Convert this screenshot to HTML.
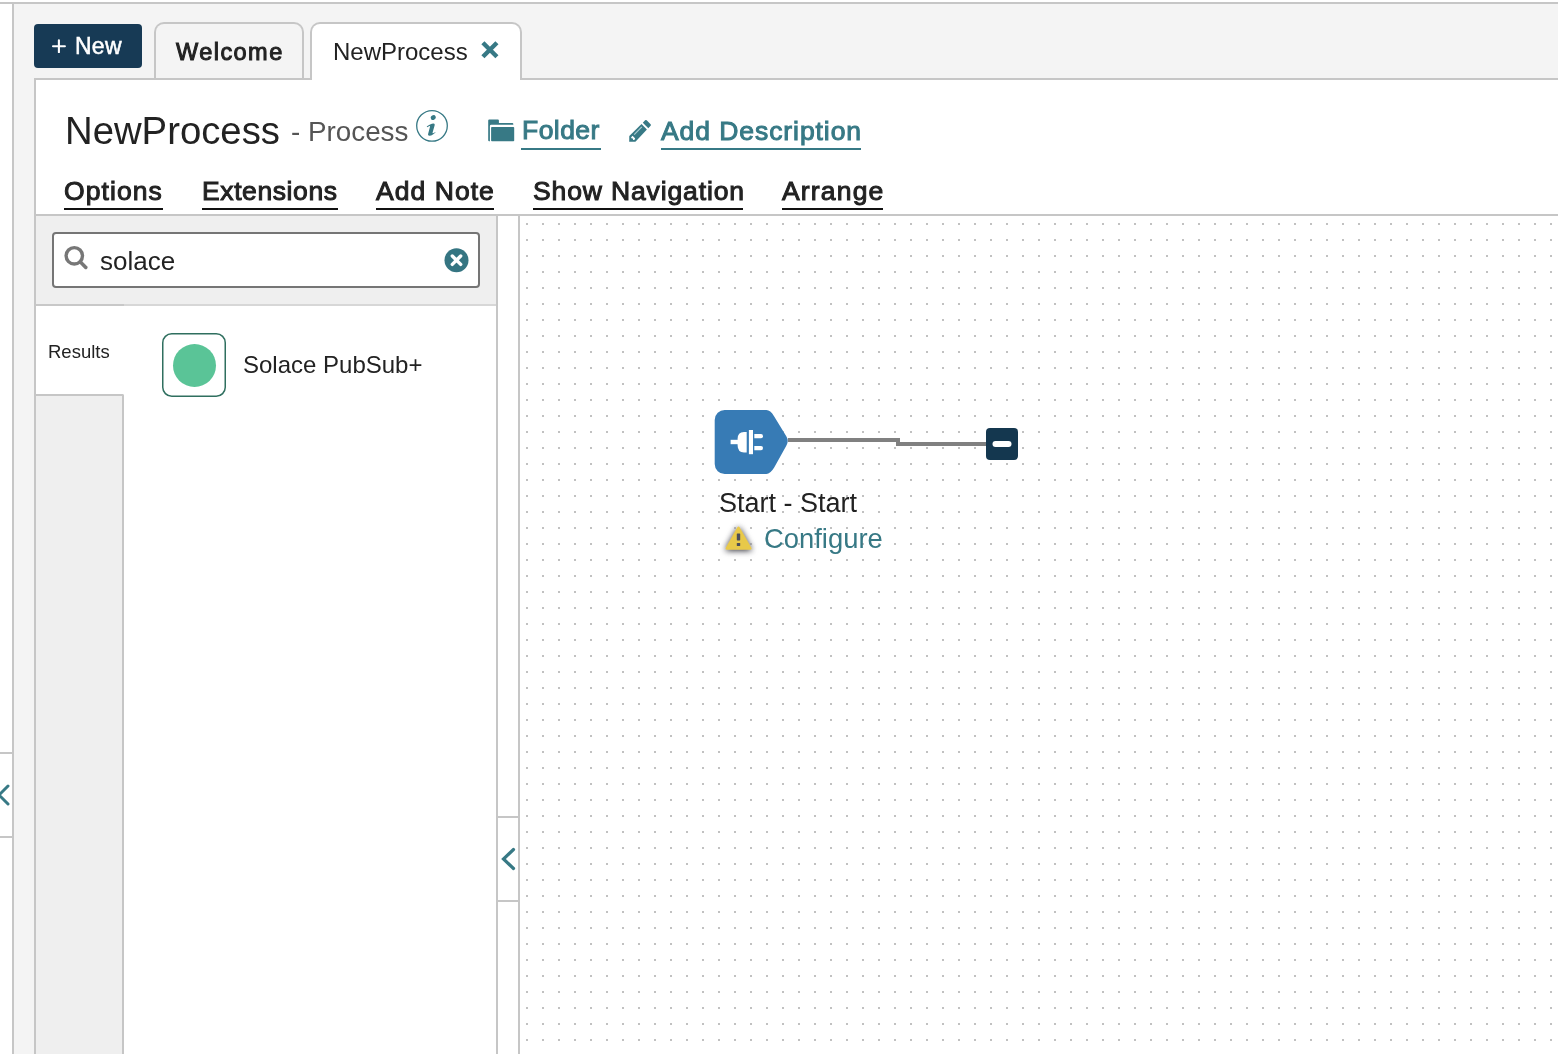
<!DOCTYPE html>
<html><head><meta charset="utf-8">
<style>
html,body{margin:0;padding:0;}
body{width:1558px;height:1054px;overflow:hidden;position:relative;background:#fff;font-family:"Liberation Sans",sans-serif;color:#222;}
.a{position:absolute;}
.t{position:absolute;white-space:nowrap;line-height:1;will-change:transform;}
.b{font-weight:normal;-webkit-text-stroke:1px currentColor;}
.teal{color:#377985;}
.ul{position:absolute;height:2px;}
</style></head>
<body>
<!-- outer frame -->
<div class="a" style="left:0;top:2px;width:1558px;height:2px;background:#c6c6c6"></div>
<div class="a" style="left:14px;top:4px;width:1544px;height:1050px;background:#f4f4f4"></div>
<div class="a" style="left:12px;top:4px;width:2px;height:1050px;background:#c6c6c6"></div>
<!-- left collapsed strip -->
<div class="a" style="left:0;top:752px;width:12px;height:2px;background:#c6c6c6"></div>
<div class="a" style="left:0;top:836px;width:12px;height:2px;background:#c6c6c6"></div>
<svg class="a" style="left:0;top:780px" width="12" height="30"><path d="M8,6 L-1,15 L8,24" fill="none" stroke="#377985" stroke-width="3" stroke-linecap="round"/></svg>

<!-- New button -->
<div class="a" style="left:34px;top:24px;width:108px;height:44px;background:#173a55;border-radius:4px;"></div>
<svg class="a" style="left:52px;top:39px" width="14" height="14"><path d="M6.9,1.3 V13.2 M1,7.2 H12.9" stroke="#fff" stroke-width="2.1" stroke-linecap="round"/></svg>
<div class="t b" style="left:75px;top:34.5px;font-size:23px;color:#fff;-webkit-text-stroke:0.5px #fff;letter-spacing:0.25px">New</div>

<!-- tabs -->
<div class="a" style="left:154px;top:22px;width:146px;height:60px;border:2px solid #c6c6c6;border-bottom:none;border-radius:10px 10px 0 0;background:#f4f4f4;box-sizing:content-box"></div>
<div class="t b" style="left:176px;top:40.7px;font-size:23.5px;letter-spacing:1.45px">Welcome</div>

<!-- content panel -->
<div class="a" style="left:34px;top:78px;width:1600px;height:1100px;border-left:2px solid #c6c6c6;border-top:2px solid #c6c6c6;background:#fff"></div>

<div class="a" style="left:310px;top:22px;width:208px;height:56px;border:2px solid #c6c6c6;border-bottom:none;border-radius:10px 10px 0 0;background:#fff"></div>
<div class="t" style="left:333px;top:39.5px;font-size:24px">NewProcess</div>
<svg class="a" style="left:480px;top:40px" width="20" height="20"><path d="M2.9,2.8 L16.9,16.8 M16.9,2.8 L2.9,16.8" stroke="#377985" stroke-width="4.4"/></svg>

<!-- header -->
<div class="t" style="left:64.5px;top:111.6px;font-size:38.3px">NewProcess</div>
<div class="t" style="left:291px;top:118.3px;font-size:27.8px;color:#555">- Process</div>
<svg class="a" style="left:415px;top:109px" width="34" height="34">
  <circle cx="17" cy="16.85" r="15.3" fill="none" stroke="#377985" stroke-width="1.3"/>
  <ellipse cx="18.3" cy="8.6" rx="2.6" ry="2.3" transform="rotate(-30 18.3 8.6)" fill="#377985"/>
  <path d="M11.7,17.6 C13.5,15.8 17,14.4 18.5,14.5 C19.8,14.6 19.9,15.5 19.6,16.5 L17.6,23.6 C17.4,24.3 17.8,24.4 18.5,24 L20.9,22.9 C19.5,24.8 16.5,26.5 14.5,26.7 C13.2,26.8 12.9,26 13.1,25.1 L15,17.8 C15.2,17 14.6,16.9 14,17.3 L12.3,18.3 Z" fill="#377985"/>
</svg>

<!-- folder icon -->
<svg class="a" style="left:484px;top:114px" width="34" height="32">
  <path d="M4.2,6.5 Q4.2,5.5 5.2,5.5 L13.9,5.5 Q14.9,5.5 14.9,6.5 L14.9,9 L28.3,9 Q29.3,9 29.3,10 L29.3,10.8 L7.1,10.8 Q5.9,10.8 5.9,12 L5.9,27.3 L5.2,27.3 Q4.2,27.3 4.2,26.3 Z" fill="#377985"/>
  <rect x="7.1" y="13" width="23.1" height="14.2" rx="0.8" fill="#377985"/>
</svg>
<div class="t b teal" style="left:522px;top:117px;font-size:26.5px;letter-spacing:0.45px">Folder</div>
<div class="ul" style="left:521px;top:148px;width:80px;background:#377985"></div>

<!-- pencil icon -->
<svg class="a" style="left:624px;top:115px" width="32" height="32">
  <path d="M17.5,9 L22.9,14.6 L11.4,26.7 L5.2,26.7 L5.3,20.9 Z" fill="#377985"/>
  <path d="M18.8,7.7 L21.1,5.3 Q21.9,4.5 22.7,5.3 L26.6,9.2 Q27.4,10 26.6,10.8 L24.3,13.2 Z" fill="#377985"/>
  <path d="M10.2,19.6 L17.8,11.8" stroke="#a9cdd2" stroke-width="1.2"/>
  <path d="M7.1,22.2 L8.6,20.8 L11.2,23.4 L10.3,25 L9.2,25 L8.8,23.6 L7.4,23.3 Z" fill="#fff"/>
</svg>
<div class="t b teal" style="left:661px;top:118.3px;font-size:26.5px;letter-spacing:0.93px">Add Description</div>
<div class="ul" style="left:661px;top:148px;width:200px;background:#377985"></div>

<!-- menu -->
<div class="t b" style="left:64px;top:177.5px;font-size:26.5px;letter-spacing:1.07px">Options</div>
<div class="ul" style="left:64px;top:208px;width:99px;background:#111"></div>
<div class="t b" style="left:202px;top:177.5px;font-size:26.5px;letter-spacing:0.6px">Extensions</div>
<div class="ul" style="left:202px;top:208px;width:136px;background:#111"></div>
<div class="t b" style="left:376px;top:177.5px;font-size:26.5px;letter-spacing:1.05px">Add Note</div>
<div class="ul" style="left:376px;top:208px;width:118px;background:#111"></div>
<div class="t b" style="left:532.5px;top:177.5px;font-size:26.5px;letter-spacing:0.87px">Show Navigation</div>
<div class="ul" style="left:533px;top:208px;width:210px;background:#111"></div>
<div class="t b" style="left:782px;top:177.5px;font-size:26.5px;letter-spacing:1.17px">Arrange</div>
<div class="ul" style="left:782px;top:208px;width:101px;background:#111"></div>

<!-- horizontal divider -->
<div class="a" style="left:36px;top:214px;width:1522px;height:2px;background:#c6c6c6"></div>

<!-- left panel -->
<div class="a" style="left:36px;top:216px;width:460px;height:88px;background:#efefef"></div>
<div class="a" style="left:36px;top:304px;width:88px;height:2px;background:#c8c8c8"></div>
<div class="a" style="left:124px;top:304px;width:372px;height:2px;background:#d7d7d7"></div>
<div class="a" style="left:36px;top:394px;width:86px;height:700px;background:#efefef;border-top:2px solid #c6c6c6;border-right:2px solid #c6c6c6;border-top-right-radius:2px"></div>
<div class="a" style="left:496px;top:216px;width:2px;height:838px;background:#c6c6c6"></div>
<div class="a" style="left:518px;top:216px;width:2px;height:838px;background:#c6c6c6"></div>
<div class="a" style="left:498px;top:816px;width:20px;height:2px;background:#c6c6c6"></div>
<div class="a" style="left:498px;top:900px;width:20px;height:2px;background:#c6c6c6"></div>
<svg class="a" style="left:498px;top:845px" width="20" height="30"><path d="M15.5,4.5 L5.5,14 L15.5,23.5" fill="none" stroke="#377985" stroke-width="3.2" stroke-linecap="round" stroke-linejoin="miter"/></svg>

<!-- search box -->
<div class="a" style="left:52px;top:232px;width:424px;height:52px;border:2px solid #757575;border-radius:4px;background:#fff"></div>
<svg class="a" style="left:62px;top:244px" width="28" height="28">
  <circle cx="12.3" cy="11.8" r="8.2" fill="none" stroke="#777" stroke-width="3.4"/>
  <path d="M18.2,17.8 L23.8,23.4" stroke="#777" stroke-width="3.6" stroke-linecap="round"/>
</svg>
<div class="t" style="left:100px;top:247.7px;font-size:26px">solace</div>
<svg class="a" style="left:444px;top:248px" width="25" height="25">
  <circle cx="12.5" cy="12.2" r="12" fill="#357582"/>
  <path d="M8.3,8 L16.7,16.4 M16.7,8 L8.3,16.4" stroke="#fff" stroke-width="3.4" stroke-linecap="round"/>
</svg>

<!-- results -->
<div class="t" style="left:48px;top:343px;font-size:18.5px">Results</div>
<svg class="a" style="left:162px;top:333px" width="64" height="64"><rect x="0.75" y="0.75" width="62.5" height="62.5" rx="9" fill="#fff" stroke="#2f6f5f" stroke-width="1.5"/></svg>
<div class="a" style="left:172.5px;top:343.5px;width:43px;height:43px;border-radius:50%;background:#5ac497"></div>
<div class="t" style="left:243px;top:352.7px;font-size:24px">Solace PubSub+</div>

<!-- canvas -->
<svg class="a" style="left:520px;top:216px" width="1038" height="838">
  <defs><pattern id="dots" x="6" y="7" width="16" height="16" patternUnits="userSpaceOnUse"><rect x="0" y="0" width="2" height="2" fill="#c1c1c1"/></pattern></defs>
  <rect x="0" y="0" width="1038" height="838" fill="url(#dots)"/>
</svg>

<!-- start shape -->
<svg class="a" style="left:700px;top:400px" width="340" height="80">
  <path d="M25,10 H66.4 Q70.3,10 74.2,16.4 L86.3,36.3 Q89.16,41 86.3,45.7 L74.2,67.6 Q70.3,74 66.4,74 H25 A10,10 0 0 1 14.7,64 V20 A10,10 0 0 1 25,10 Z" fill="#377bb5"/>
  <!-- plug -->
  <path d="M30.6,39.8 H38.5 V44.2 H30.6 Z" fill="#fff"/>
  <path d="M46.7,32 L46.7,52.4 L44,52.4 Q37.6,52.4 37.6,45 L37.6,39 Q37.6,32 44,32 Z" fill="#fff"/>
  <rect x="48.9" y="30" width="4.1" height="24.2" fill="#fff"/>
  <path d="M54.3,34.1 H61 Q63,34.1 63,36.2 Q63,38.3 61,38.3 H54.3 Z" fill="#fff"/>
  <path d="M54.3,45.9 H61 Q63,45.9 63,48 Q63,50.2 61,50.2 H54.3 Z" fill="#fff"/>
  <!-- connector -->
  <path d="M88,40 H198 V44 H286" fill="none" stroke="#808080" stroke-width="4"/>
  <rect x="286" y="28" width="32" height="32" rx="4" fill="#14374f"/>
  <rect x="292.5" y="41" width="19" height="6" rx="3" fill="#fff"/>
</svg>

<div class="t" style="left:719px;top:490.4px;font-size:27px">Start - Start</div>
<svg class="a" style="left:720px;top:520px;overflow:visible" width="40" height="38">
  <defs><filter id="sh" x="-40%" y="-40%" width="180%" height="180%"><feGaussianBlur in="SourceAlpha" stdDeviation="3"/><feOffset dy="0.8"/><feComponentTransfer><feFuncR type="linear" slope="0" intercept="0.2"/><feFuncG type="linear" slope="0" intercept="0.2"/><feFuncB type="linear" slope="0" intercept="0.22"/><feFuncA type="linear" slope="1.6"/></feComponentTransfer><feMerge><feMergeNode/><feMergeNode in="SourceGraphic"/></feMerge></filter></defs>
  <path d="M17.2,7.6 Q18.5,5.4 19.8,7.6 L31.2,27.6 Q32.5,29.7 30.2,29.7 L7,29.7 Q4.6,29.7 5.9,27.6 Z" fill="#e8c94a" filter="url(#sh)"/>
  <rect x="16.8" y="13.4" width="3.4" height="7" rx="0.6" fill="#4a4d5a"/>
  <rect x="16.8" y="22.9" width="3.4" height="3.2" rx="0.5" fill="#4a4d5a"/>
</svg>
<div class="t teal" style="left:764px;top:524.8px;font-size:27.4px">Configure</div>

</body></html>
